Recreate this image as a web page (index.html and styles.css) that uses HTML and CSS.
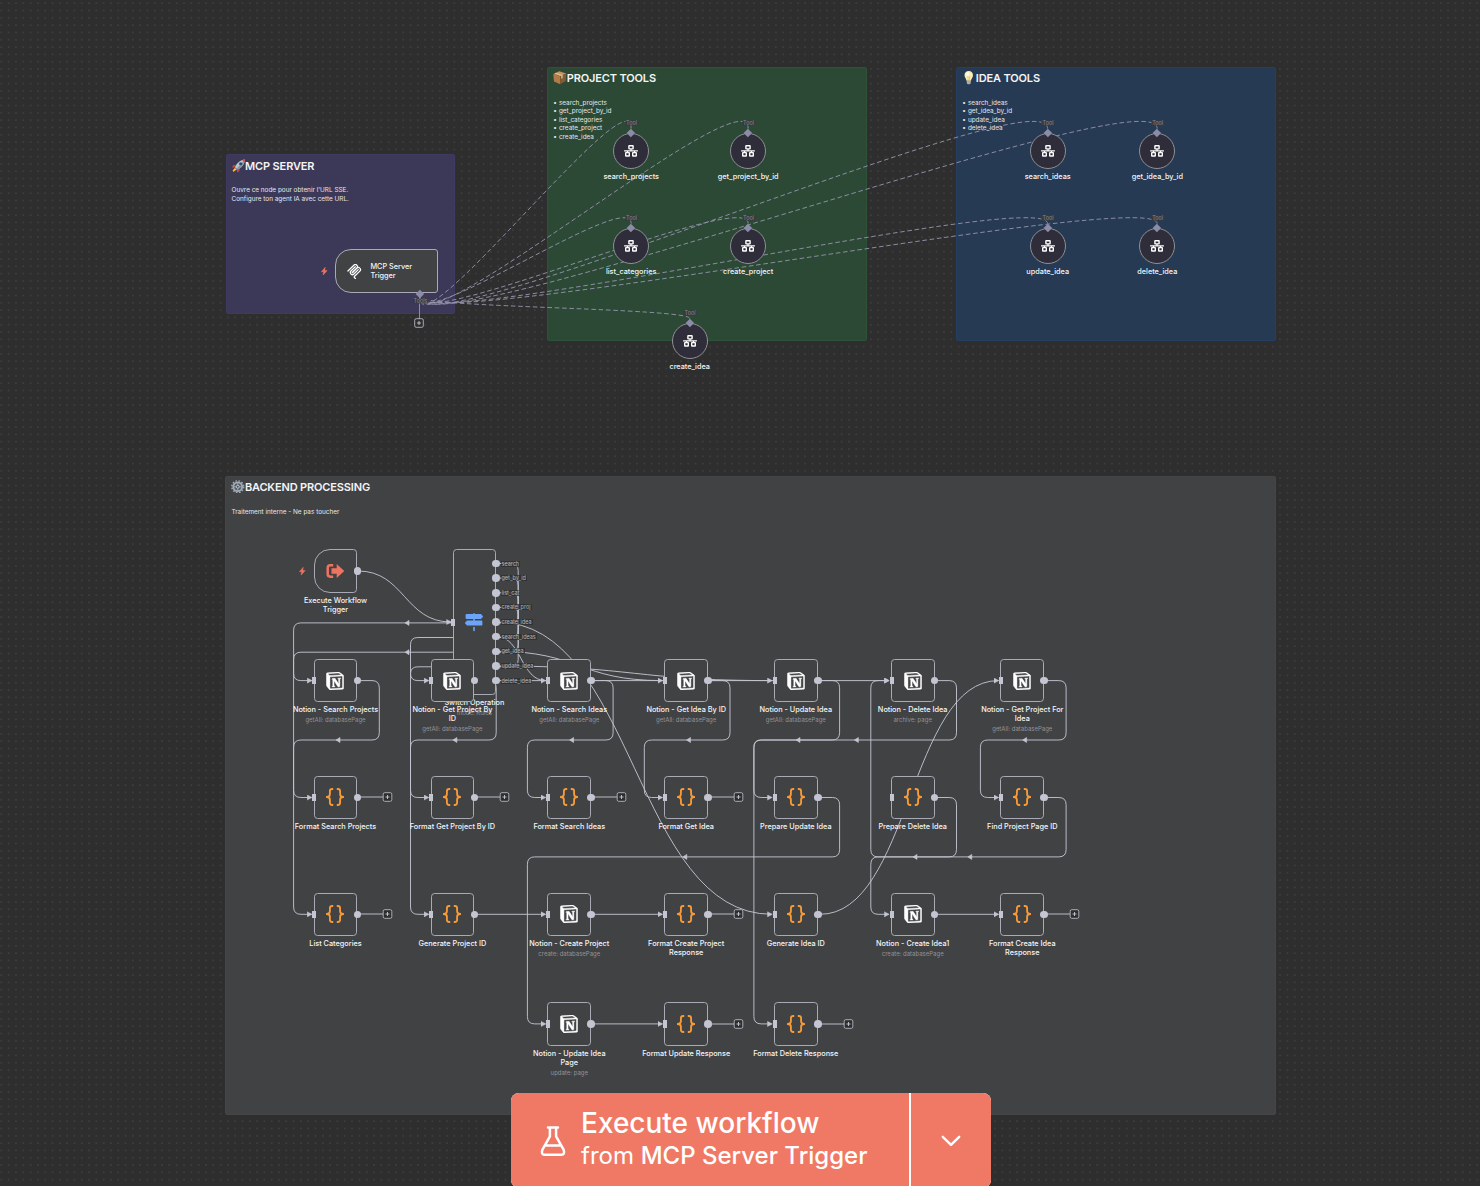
FILE: index.html
```html
<!DOCTYPE html>
<html lang="fr">
<head>
<meta charset="utf-8">
<title>Workflow</title>
<link rel="stylesheet" href="styles.css">
</head>
<body>
<svg class="defs" width="0" height="0">
  <defs>
    <symbol id="notion" viewBox="0 0 24 24"><path fill="#fff" stroke="#fff" stroke-width=".55" d="M4.459 4.208c.746.606 1.026.56 2.428.466l13.215-.793c.28 0 .047-.28-.046-.326L17.86 1.968c-.42-.326-.981-.7-2.055-.607L3.01 2.295c-.466.046-.56.28-.374.466zm.793 3.08v13.904c0 .747.373 1.027 1.214.98l14.523-.84c.841-.046.935-.56.935-1.167V6.354c0-.606-.233-.933-.748-.887l-15.177.887c-.56.047-.747.327-.747.933zm14.337.745c.093.42 0 .84-.42.888l-.7.14v10.264c-.608.327-1.168.514-1.635.514-.748 0-.935-.234-1.495-.933l-4.577-7.186v6.952L12.21 19s0 .84-1.168.84l-3.222.186c-.093-.186 0-.653.327-.746l.84-.233V9.854L7.822 9.76c-.094-.42.14-1.026.793-1.073l3.456-.233 4.764 7.279v-6.44l-1.215-.139c-.093-.514.28-.887.747-.933zM1.936 1.035l13.31-.98c1.634-.14 2.055-.047 3.082.7l4.249 2.986c.7.513.934.653.934 1.213v16.378c0 1.026-.373 1.634-1.68 1.726l-15.458.934c-.98.047-1.448-.093-1.962-.747l-3.129-4.06c-.56-.747-.793-1.306-.793-1.96V2.667c0-.839.374-1.54 1.447-1.632z"/></symbol>
    <symbol id="code" viewBox="0 0 18 18"><g fill="none" stroke="#f79b37" stroke-width="1.850" stroke-linejoin="round"><path d="M7.200 1H6.200C4.500 1 3.900 1.700 3.900 3.200V6.300C3.900 8 3 9 .7 9 3 9 3.900 10 3.900 11.700V14.800C3.900 16.300 4.500 17 6.200 17H7.200"/><path d="M10.800 1H11.800C13.500 1 14.100 1.700 14.100 3.200V6.300C14.100 8 15 9 17.300 9 15 9 14.100 10 14.100 11.700V14.800C14.100 16.300 13.500 17 11.800 17H10.800"/></g></symbol>
    <symbol id="net" viewBox="0 0 14 12"><g fill="none" stroke="#fff" stroke-width="1.400"><rect x="4.900" y=".8" width="4.200" height="3.100" rx=".3"/><rect x="1.700" y="7.600" width="3.600" height="3.400" rx=".3"/><rect x="8.700" y="7.600" width="3.600" height="3.400" rx=".3"/><path stroke-width="1.200" d="M7 4v1.900M3.500 7.600V5.900M10.500 7.600V5.900M.1 5.900h13.800"/></g></symbol>
    <symbol id="bolt" viewBox="0 0 6 8"><path fill="#ee7461" stroke="#ee7461" stroke-width=".4" d="M3.900.2.2 4.500h2.200L1.700 7.800 5.800 3.300H3.500z"/></symbol>
    <marker id="arrow" markerUnits="userSpaceOnUse" markerWidth="6" markerHeight="6" refX="4.600" refY="3" orient="auto"><path d="M.2.400 5 3 .2 5.600z" fill="#c3c6d2" stroke="#c3c6d2" stroke-width=".4" stroke-linejoin="round"/></marker>
    <path id="back" d="M2-2.500V2.500L-2 0z" fill="#c3c6d2" stroke="#c3c6d2" stroke-width=".6" stroke-linejoin="round"/>
  </defs>
</svg>

<main class="canvas">
  <svg class="layer" width="1480" height="1186">
    <pattern id="grid" x="-2.300" y="-.5" width="7.307" height="7.307" patternUnits="userSpaceOnUse"><circle cx="3.650" cy="3.650" r=".5" fill="#6c6c6c"/></pattern>
    <rect width="1480" height="1186" fill="url(#grid)"/>
  </svg>

  <section class="sticky sticky-purple">
    <h2><svg class="emoji" viewBox="0 0 14 14"><path d="M4 6 .9 6.600.2 9l3-.4zM8 10l-.6 3.100L5 13.800l.4-3z" fill="#c94434"/><path d="M3 8.500C5 4 8.500 1 13.500.5 13 5.500 10 9 5.500 11z" fill="#b9c6d0"/><path d="M4.500 10.300 12.500 1.500 13.500.5C13 5.500 10 9 5.500 11z" fill="#8494a3"/><path d="M13.500.5 10.500 1l2.500 2.500z" fill="#d84b3b"/><circle cx="9" cy="5" r="1.600" fill="#234b73"/><path d="m3 9 2 2-3.700 2.400L.6 12z" fill="#f5a623"/><path d="m3 10 1 1-2.500 1.500z" fill="#ffe36b"/></svg>MCP SERVER</h2>
    <p>Ouvre ce node pour obtenir l'URL SSE.<br>Configure ton agent IA avec cette URL.</p>
  </section>
  <section class="sticky sticky-green">
    <h2><svg class="emoji" viewBox="0 0 14 14"><path d="m.3 3 6.200-2.700 7.200 2.200-6.200 3z" fill="#c9935c"/><path d="m.3 3 7.200 2.500v8.300L1 10.900z" fill="#b07b48"/><path d="m7.500 5.500 6.200-3-.5 7.900-5.700 3.400z" fill="#875a33"/><path d="m3 1.900 7 2.200V7.400L8.600 8V4.900L1.600 2.500z" fill="#dfc195"/></svg>PROJECT TOOLS</h2>
    <ul><li>search_projects</li><li>get_project_by_id</li><li>list_categories</li><li>create_project</li><li>create_idea</li></ul>
  </section>
  <section class="sticky sticky-blue">
    <h2><svg class="emoji" viewBox="0 0 14 14"><path d="M7 .1C4.300.1 2.600 2 2.600 4.300c0 2.300 1.800 3.200 2.100 5.800h4.600c.3-2.600 2.100-3.500 2.100-5.800C11.400 2 9.700.1 7 .1z" fill="#fbedb4"/><path d="M6 5.200 6.500 10h1L8 5.200" fill="none" stroke="#e0b040" stroke-width=".6"/><ellipse cx="5.800" cy="3.200" rx="1.600" ry="1.900" fill="#fffdf2"/><path d="M4.900 10h4.200v2.600L8 13.700H6l-1.100-1.100z" fill="#a9adb0"/></svg>IDEA TOOLS</h2>
    <ul><li>search_ideas</li><li>get_idea_by_id</li><li>update_idea</li><li>delete_idea</li></ul>
  </section>
  <section class="sticky sticky-gray">
    <h2><svg class="emoji" viewBox="0 0 14 14"><circle cx="7" cy="7" r="6.200" fill="none" stroke="#a2adb8" stroke-width="1.400" stroke-dasharray="1.700 1.546"/><circle cx="7" cy="7" r="4.600" fill="#555c63" stroke="#a2adb8" stroke-width="1.900"/><path d="M7 3v3M7 8v3M3 7h3M8 7h3" stroke="#a2adb8" stroke-width=".9"/><circle cx="7" cy="7" r="1.500" fill="#4c5257" stroke="#c0c8cf" stroke-width="1"/></svg>BACKEND PROCESSING</h2>
    <p>Traitement interne - Ne pas toucher</p>
  </section>

  <svg class="layer" width="1480" height="1186">
    <g class="tool-edges">
      <path d="M631.200 128.600C631.200 73.600 419.500 352 419.500 297"/>
      <path d="M748.200 128.600C748.200 73.600 419.500 352 419.500 297"/>
      <path d="M1047.600 128.600C1047.600 73.600 419.500 352 419.500 297"/>
      <path d="M1157.200 128.600C1157.200 73.600 419.500 352 419.500 297"/>
      <path d="M631.200 223.600C631.200 187.100 419.500 333.500 419.500 297"/>
      <path d="M748.200 223.600C748.200 187.100 419.500 333.500 419.500 297"/>
      <path d="M1047.600 223.600C1047.600 187.100 419.500 333.500 419.500 297"/>
      <path d="M1157.200 223.600C1157.200 187.100 419.500 333.500 419.500 297"/>
      <path d="M689.700 318.500C689.700 308 419.500 307.500 419.500 297"/>
    </g>
    <path class="stem" d="M419.500 296V319"/>
    <g class="edges">
      <path d="M358 571C404.500 571 404.500 622 451 622"/>
      <!-- switch outputs -->
      <path d="M497 563.500H510.900Q518.200 563.500 518.200 570.800V615.600Q518.200 622.900 510.900 622.900H300.900Q293.600 622.900 293.600 630.200V673.300Q293.600 680.600 300.900 680.600H311.600"/>
      <path d="M497 578.100H510.900Q518.200 578.100 518.200 585.400V630.200Q518.200 637.500 510.900 637.500H417.800Q410.500 637.500 410.500 644.800V673.300Q410.500 680.600 417.800 680.600H428.500"/>
      <path d="M497 592.800H510.900Q518.200 592.800 518.200 600.100V644.900Q518.200 652.200 510.900 652.200H300.900Q293.600 652.200 293.600 659.500V907Q293.600 914.300 300.900 914.300H311.600"/>
      <path d="M497 607.400H510.900Q518.200 607.400 518.200 614.700V659.500Q518.200 666.800 510.900 666.800H417.800Q410.500 666.800 410.500 674.100V907Q410.500 914.300 417.800 914.300H428.500"/>
      <path d="M497 622C634.500 622 634.500 914.300 771.900 914.300"/>
      <path d="M497 636.700C521 636.700 521 680.600 545.400 680.600"/>
      <path d="M497 651.300C579.500 651.300 579.500 680.600 662.300 680.600"/>
      <path d="M497 666C634.500 666 634.500 680.600 771.900 680.600"/>
      <path d="M497 680.600H888.800"/>
      <!-- first row down to second row -->
      <path d="M358 680.600H372Q379.300 680.600 379.300 687.900V732.700Q379.300 740 372 740H300.900Q293.600 740 293.600 747.300V790.200Q293.600 797.500 300.900 797.500H311.600"/>
      <path d="M475 680.600H488.900Q496.200 680.600 496.200 687.900V732.700Q496.200 740 488.900 740H417.800Q410.500 740 410.500 747.300V790.200Q410.500 797.500 417.800 797.500H428.500"/>
      <path d="M592 680.600H605.800Q613.100 680.600 613.100 687.900V732.700Q613.100 740 605.800 740H534.700Q527.400 740 527.400 747.300V790.200Q527.400 797.500 534.700 797.500H545.400"/>
      <path d="M709 680.600H722.700Q730 680.600 730 687.900V732.700Q730 740 722.700 740H651.600Q644.300 740 644.300 747.300V790.200Q644.300 797.500 651.600 797.500H662.300"/>
      <path d="M818 680.600H832.300Q839.600 680.600 839.600 687.900V732.700Q839.600 740 832.300 740H761.200Q753.900 740 753.900 747.300V790.200Q753.900 797.500 761.200 797.500H771.900"/>
      <path d="M935 680.600H949.200Q956.500 680.600 956.500 687.900V732.700Q956.500 740 949.200 740H761.200Q753.900 740 753.900 747.300V1016.600Q753.900 1023.900 761.200 1023.900H771.900"/>
      <path d="M1044 680.600H1058.800Q1066.100 680.600 1066.100 687.900V732.700Q1066.100 740 1058.800 740H987.700Q980.400 740 980.400 747.300V790.200Q980.400 797.500 987.700 797.500H998.400"/>
      <!-- second row onwards -->
      <path d="M818 797.500H832.300Q839.600 797.500 839.600 804.800V849.600Q839.600 856.900 832.300 856.900H534.700Q527.400 856.900 527.400 864.200V1016.600Q527.400 1023.900 534.700 1023.900H545.400"/>
      <path d="M935 797.500H949.200Q956.500 797.500 956.500 804.800V849.600Q956.500 856.900 949.200 856.900H878.100Q870.800 856.900 870.800 849.600V687.900Q870.800 680.600 878.100 680.600H888.800"/>
      <path d="M1044 797.500H1058.800Q1066.100 797.500 1066.100 804.800V849.600Q1066.100 856.900 1058.800 856.900H878.100Q870.800 856.900 870.800 864.200V907Q870.800 914.300 878.100 914.300H888.800"/>
      <path d="M820 914.300C909.500 914.300 909.500 680.600 998.400 680.600"/>
      <path d="M474 914.300H545.400"/>
      <path d="M591 914.300H662.300"/>
      <path d="M935 914.300H998.400"/>
      <path d="M591 1023.900H662.300"/>
    </g>
    <use href="#back" x="407" y="622.900"/><use href="#back" x="407" y="652.200"/>
    <use href="#back" x="338" y="740"/><use href="#back" x="454.900" y="740"/><use href="#back" x="571.600" y="740"/><use href="#back" x="688.500" y="740"/><use href="#back" x="798" y="740"/><use href="#back" x="856.400" y="740"/><use href="#back" x="1024.600" y="740"/>
    <use href="#back" x="684.800" y="856.900"/><use href="#back" x="915" y="856.900"/><use href="#back" x="969.800" y="856.900"/>
  </svg>

  <!-- MCP trigger -->
  <svg class="bolt" viewBox="0 0 6 8" style="--x:324.500px;--y:271px"><use href="#bolt"/></svg>
  <div class="mcp-node">
    <svg viewBox="0 0 24 24"><g fill="none" stroke="#fff" stroke-width="2" stroke-linecap="round"><path d="M1.500 11.300 11 1.900a3.300 3.300 0 0 1 4.700 4.700L8.500 13.800"/><path d="m8.600 13.700 7.100-7.100a3.300 3.300 0 0 1 4.800 4.800l-8.700 8.600a1.100 1.100 0 0 0 0 1.600l1.800 1.800"/><path d="M13.300 4.300 6.300 11.300A3.300 3.300 0 0 0 11 16l7-7"/></g></svg>
    <span>MCP Server<br>Trigger</span>
  </div>
  <i class="diamond" style="--x:419.500px;--y:293.500px"></i>
  <span class="port-label tag" style="--x:420.500px;--y:301px">Tools</span>
  <svg class="plus-box" style="--x:419.300px;--y:323.300px" viewBox="0 0 10 10"><rect x=".7" y=".7" width="8.600" height="8.600" rx="1.500"/><path d="M5 3v4M3 5h4"/></svg>

  <!-- tools -->
  <div class="tool" style="--x:631.200px;--y:150.700px"><svg><use href="#net"/></svg><i class="diamond"></i><span class="port-label tag">Tool</span><b>search_projects</b></div>
  <div class="tool" style="--x:748.200px;--y:150.700px"><svg><use href="#net"/></svg><i class="diamond"></i><span class="port-label tag">Tool</span><b>get_project_by_id</b></div>
  <div class="tool" style="--x:631.200px;--y:245.700px"><svg><use href="#net"/></svg><i class="diamond"></i><span class="port-label tag">Tool</span><b>list_categories</b></div>
  <div class="tool" style="--x:748.200px;--y:245.700px"><svg><use href="#net"/></svg><i class="diamond"></i><span class="port-label tag">Tool</span><b>create_project</b></div>
  <div class="tool" style="--x:689.700px;--y:340.700px"><svg><use href="#net"/></svg><i class="diamond"></i><span class="port-label tag">Tool</span><b>create_idea</b></div>
  <div class="tool" style="--x:1047.700px;--y:150.700px"><svg><use href="#net"/></svg><i class="diamond"></i><span class="port-label tag">Tool</span><b>search_ideas</b></div>
  <div class="tool" style="--x:1157.300px;--y:150.700px"><svg><use href="#net"/></svg><i class="diamond"></i><span class="port-label tag">Tool</span><b>get_idea_by_id</b></div>
  <div class="tool" style="--x:1047.700px;--y:245.700px"><svg><use href="#net"/></svg><i class="diamond"></i><span class="port-label tag">Tool</span><b>update_idea</b></div>
  <div class="tool" style="--x:1157.300px;--y:245.700px"><svg><use href="#net"/></svg><i class="diamond"></i><span class="port-label tag">Tool</span><b>delete_idea</b></div>

  <!-- workflow trigger -->
  <svg class="bolt" viewBox="0 0 6 8" style="--x:302.700px;--y:570.800px"><use href="#bolt"/></svg>
  <div class="node trigger" style="--x:335.500px;--y:570.900px"><svg class="icon" viewBox="0 0 18 18"><path d="M7.200 3.300H4.300Q1.700 3.300 1.700 5.900v6.200q0 2.600 2.600 2.600h2.900" fill="none" stroke="#ee7461" stroke-width="2.500"/><path d="M5.500 6.300h5.200V2L18.300 9l-7.600 7v-4.300H5.500z" fill="#ee7461"/></svg><p class="label">Execute Workflow<br>Trigger</p></div>

  <!-- switch -->
  <div class="node switch" style="--x:474.300px;--y:622px"><svg class="icon" viewBox="0 0 18 18"><path fill="#6ba4f8" d="M8.200.2h1.600v.9H16l2.200 2.400L16 5.900H1.500a.9.900 0 0 1-.9-.9V2a.9.900 0 0 1 .9-.9h6.700zM8.200 5.800h1.600v2.100H8.200zM2 7.600h14.500a.9.900 0 0 1 .9.900v3a.9.900 0 0 1-.9.900H2L-.2 10zM8.200 13.900h1.600v3.600a.8.800 0 0 1-1.600 0z"/></svg><p class="label">Switch Operation<small>mode: Rules</small></p>
    <ol><li><span class="port-label">search</span></li><li><span class="port-label">get_by_id</span></li><li><span class="port-label">list_cat</span></li><li><span class="port-label">create_proj</span></li><li><span class="port-label">create_idea</span></li><li><span class="port-label">search_ideas</span></li><li><span class="port-label">get_idea</span></li><li><span class="port-label">update_idea</span></li><li><span class="port-label">delete_idea</span></li></ol>
  </div>

  <!-- row 1 -->
  <div class="node" style="--x:335.500px;--y:680.600px"><svg class="icon"><use href="#notion"/></svg><p class="label">Notion - Search Projects<small>getAll: databasePage</small></p></div>
  <div class="node" style="--x:452.400px;--y:680.600px"><svg class="icon"><use href="#notion"/></svg><p class="label">Notion - Get Project By<br>ID<small>getAll: databasePage</small></p></div>
  <div class="node" style="--x:569.300px;--y:680.600px"><svg class="icon"><use href="#notion"/></svg><p class="label">Notion - Search Ideas<small>getAll: databasePage</small></p></div>
  <div class="node" style="--x:686.200px;--y:680.600px"><svg class="icon"><use href="#notion"/></svg><p class="label">Notion - Get Idea By ID<small>getAll: databasePage</small></p></div>
  <div class="node" style="--x:795.800px;--y:680.600px"><svg class="icon"><use href="#notion"/></svg><p class="label">Notion - Update Idea<small>getAll: databasePage</small></p></div>
  <div class="node" style="--x:912.700px;--y:680.600px"><svg class="icon"><use href="#notion"/></svg><p class="label">Notion - Delete Idea<small>archive: page</small></p></div>
  <div class="node" style="--x:1022.300px;--y:680.600px"><svg class="icon"><use href="#notion"/></svg><p class="label">Notion - Get Project For<br>Idea<small>getAll: databasePage</small></p></div>

  <!-- row 2 -->
  <div class="node" style="--x:335.500px;--y:797.500px"><svg class="icon"><use href="#code"/></svg><p class="label">Format Search Projects</p><svg class="plus" viewBox="0 0 36 10"><path d="M0 5h26"/><rect x="26.200" y=".7" width="8.600" height="8.600" rx="1.500"/><path d="M30.500 3v4M28.500 5h4"/></svg></div>
  <div class="node" style="--x:452.400px;--y:797.500px"><svg class="icon"><use href="#code"/></svg><p class="label">Format Get Project By ID</p><svg class="plus" viewBox="0 0 36 10"><path d="M0 5h26"/><rect x="26.200" y=".7" width="8.600" height="8.600" rx="1.500"/><path d="M30.500 3v4M28.500 5h4"/></svg></div>
  <div class="node" style="--x:569.300px;--y:797.500px"><svg class="icon"><use href="#code"/></svg><p class="label">Format Search Ideas</p><svg class="plus" viewBox="0 0 36 10"><path d="M0 5h26"/><rect x="26.200" y=".7" width="8.600" height="8.600" rx="1.500"/><path d="M30.500 3v4M28.500 5h4"/></svg></div>
  <div class="node" style="--x:686.200px;--y:797.500px"><svg class="icon"><use href="#code"/></svg><p class="label">Format Get Idea</p><svg class="plus" viewBox="0 0 36 10"><path d="M0 5h26"/><rect x="26.200" y=".7" width="8.600" height="8.600" rx="1.500"/><path d="M30.500 3v4M28.500 5h4"/></svg></div>
  <div class="node" style="--x:795.800px;--y:797.500px"><svg class="icon"><use href="#code"/></svg><p class="label">Prepare Update Idea</p></div>
  <div class="node" style="--x:912.700px;--y:797.500px"><svg class="icon"><use href="#code"/></svg><p class="label">Prepare Delete Idea</p></div>
  <div class="node" style="--x:1022.300px;--y:797.500px"><svg class="icon"><use href="#code"/></svg><p class="label">Find Project Page ID</p></div>

  <!-- row 3 -->
  <div class="node" style="--x:335.500px;--y:914.500px"><svg class="icon"><use href="#code"/></svg><p class="label">List Categories</p><svg class="plus" viewBox="0 0 36 10"><path d="M0 5h26"/><rect x="26.200" y=".7" width="8.600" height="8.600" rx="1.500"/><path d="M30.500 3v4M28.500 5h4"/></svg></div>
  <div class="node" style="--x:452.400px;--y:914.500px"><svg class="icon"><use href="#code"/></svg><p class="label">Generate Project ID</p></div>
  <div class="node" style="--x:569.300px;--y:914.500px"><svg class="icon"><use href="#notion"/></svg><p class="label">Notion - Create Project<small>create: databasePage</small></p></div>
  <div class="node" style="--x:686.200px;--y:914.500px"><svg class="icon"><use href="#code"/></svg><p class="label">Format Create Project<br>Response</p><svg class="plus" viewBox="0 0 36 10"><path d="M0 5h26"/><rect x="26.200" y=".7" width="8.600" height="8.600" rx="1.500"/><path d="M30.500 3v4M28.500 5h4"/></svg></div>
  <div class="node" style="--x:795.800px;--y:914.500px"><svg class="icon"><use href="#code"/></svg><p class="label">Generate Idea ID</p></div>
  <div class="node" style="--x:912.700px;--y:914.500px"><svg class="icon"><use href="#notion"/></svg><p class="label">Notion - Create Idea1<small>create: databasePage</small></p></div>
  <div class="node" style="--x:1022.300px;--y:914.500px"><svg class="icon"><use href="#code"/></svg><p class="label">Format Create Idea<br>Response</p><svg class="plus" viewBox="0 0 36 10"><path d="M0 5h26"/><rect x="26.200" y=".7" width="8.600" height="8.600" rx="1.500"/><path d="M30.500 3v4M28.500 5h4"/></svg></div>

  <!-- row 4 -->
  <div class="node" style="--x:569.300px;--y:1023.900px"><svg class="icon"><use href="#notion"/></svg><p class="label">Notion - Update Idea<br>Page<small>update: page</small></p></div>
  <div class="node" style="--x:686.200px;--y:1023.900px"><svg class="icon"><use href="#code"/></svg><p class="label">Format Update Response</p><svg class="plus" viewBox="0 0 36 10"><path d="M0 5h26"/><rect x="26.200" y=".7" width="8.600" height="8.600" rx="1.500"/><path d="M30.500 3v4M28.500 5h4"/></svg></div>
  <div class="node" style="--x:795.800px;--y:1023.900px"><svg class="icon"><use href="#code"/></svg><p class="label">Format Delete Response</p><svg class="plus" viewBox="0 0 36 10"><path d="M0 5h26"/><rect x="26.200" y=".7" width="8.600" height="8.600" rx="1.500"/><path d="M30.500 3v4M28.500 5h4"/></svg></div>

  <div class="run">
    <button class="run-main">
      <svg class="flask" viewBox="0 0 26 32"><g fill="none" stroke="#fff" stroke-width="2.500" stroke-linecap="round" stroke-linejoin="round"><path d="M8 2.400h10M9.900 2.400v9L2.300 24.800Q.9 29.700 4.600 29.700h16.800q3.700 0 2.300-4.900L16.100 11.400v-9M6 20.400h14"/></g></svg>
      <span><strong>Execute workflow</strong><em>from <b>MCP Server Trigger</b></em></span>
    </button>
    <button class="run-more" aria-label="Triggers"><svg viewBox="0 0 20 12"><path d="m1.800 1.800 8.200 8 8.200-8" fill="none" stroke="#fff" stroke-width="2.400" stroke-linecap="round" stroke-linejoin="round"/></svg></button>
  </div>
</main>
</body>
</html>
```
FILE: styles.css
```css
* { box-sizing: border-box; }
body { margin: 0; background: #2e2e2e; font-family: Inter, "Liberation Sans", sans-serif; color: #f4f4f6; }
.defs { position: absolute; }
.canvas { position: relative; width: 1480px; height: 1186px; overflow: hidden; }
.layer { position: absolute; left: 0; top: 0; }

.sticky { position: absolute; border: 1px solid; border-radius: 2px; padding: 3px 5px; }
.sticky h2 { display: flex; align-items: center; margin: 0; height: 14px; font-size: 11px; font-weight: 600; line-height: 14px; letter-spacing: -.15px; white-space: nowrap; }
.sticky .emoji { width: 13.500px; height: 13.500px; flex: none; }
.sticky p, .sticky ul { margin: 13.500px 0 0; padding: 0; list-style: none; font-size: 6.400px; line-height: 8.600px; color: #e6e6ea; }
.sticky li::before { content: "•"; margin-right: 2px; }
.sticky-purple { left: 225.600px; top: 153.800px; width: 229px; height: 160.500px; padding-top: 4px; background: #3c3857; border-color: #403a62; }
.sticky-green { left: 547.300px; top: 67px; width: 320px; height: 273.800px; background: #2b4935; border-color: #2d5239; }
.sticky-blue { left: 956.300px; top: 67px; width: 320px; height: 273.800px; background: #263a53; border-color: #263e60; }
.sticky-gray { left: 225.400px; top: 475.600px; width: 1050.800px; height: 639.800px; background: #414244; border-color: #444547; }
.sticky-gray p { margin-top: 14px; }

.edges path { fill: none; stroke: #c3c6d2; stroke-width: .92; marker-end: url(#arrow); }
.tool-edges path { fill: none; stroke: #9493ab; stroke-width: .92; stroke-dasharray: 4.600 2.700; }
.stem { stroke: #9493ab; stroke-width: .92; }

.bolt { position: absolute; left: calc(var(--x) - 3.300px); top: calc(var(--y) - 4.300px); width: 6.600px; height: 8.600px; }
.diamond { position: absolute; left: calc(var(--x) - 2.900px); top: calc(var(--y) - 2.900px); width: 5.800px; height: 5.800px; background: #8d8ca8; transform: rotate(45deg); }
.port-label { display: block; padding: 0 1px; font-size: 5.500px; line-height: 6px; white-space: nowrap; color: #b3b4ba; background: rgba(46, 46, 46, .75); }
.tag { position: absolute; left: var(--x); top: var(--y); transform: translate(-50%, -50%); line-height: 5px; color: #85848f; background: #393a3d; }

.mcp-node { position: absolute; left: 335.400px; top: 249.400px; width: 102.400px; height: 43.800px; display: flex; align-items: center; gap: 8.500px; padding-left: 10.500px; font-size: 7.300px; font-weight: 500; line-height: 9.200px; background: #414244; border: 1px solid #a9a9b8; border-radius: 16px 3px 3px 16px; }
.mcp-node svg { width: 15px; height: 15px; }
.plus-box { position: absolute; left: calc(var(--x) - 5px); top: calc(var(--y) - 5px); width: 10px; height: 10px; }

.tool { position: absolute; left: calc(var(--x) - 18.200px); top: calc(var(--y) - 18.200px); width: 36.400px; height: 36.400px; display: flex; align-items: center; justify-content: center; background: #2e2d39; border: 1px solid #8f8f95; border-radius: 50%; }
.tool svg { width: 14px; height: 12px; }
.tool .diamond { left: 14.400px; top: -4px; }
.tool .tag { left: 17.600px; top: -10.900px; }
.tool b { position: absolute; left: 50%; top: 38.500px; transform: translateX(-50%); font-size: 7.300px; line-height: 9.200px; font-weight: 500; }

.node { position: absolute; left: calc(var(--x) - 21.900px); top: calc(var(--y) - 21.900px); width: 43.800px; height: 43.800px; display: flex; align-items: center; justify-content: center; background: #414244; border: 1px solid #a9aab6; border-radius: 3.600px; }
.node::before { content: ""; position: absolute; left: -2.300px; top: 17.400px; width: 4px; height: 7.300px; background: #c3c6d2; }
.node::after { content: ""; position: absolute; right: -4.900px; top: 17px; width: 7.600px; height: 7.600px; border-radius: 50%; background: #c3c6d2; }
.icon { width: 18px; height: 18px; overflow: visible; }
.label { position: absolute; left: 50%; top: 45.600px; transform: translateX(-50%); margin: 0; font-size: 7.300px; font-weight: 500; line-height: 9.200px; text-align: center; white-space: nowrap; }
.label small { display: block; margin-top: 1.500px; font-size: 6px; line-height: 8px; font-weight: 400; color: #929399; }
.plus { position: absolute; left: 42.800px; top: 15.700px; width: 36px; height: 10px; }
.plus path, .plus-box path { fill: none; stroke: #c3c6d2; stroke-width: .92; }
.plus rect, .plus-box rect { fill: #2e2e2e; stroke: #b4b6c0; stroke-width: .92; }

.trigger { border-radius: 16px 3.600px 3.600px 16px; }
.trigger::before { display: none; }
.switch { left: 452.500px; top: 549.300px; height: 145.400px; }
.switch::before { top: 68.400px; }
.switch::after { display: none; }
.switch .label { top: 147.500px; }
.switch ol { position: absolute; left: 38.500px; top: 5.900px; margin: 0; padding: 0; list-style: none; }
.switch li { display: flex; align-items: center; gap: 1px; height: 14.630px; }
.switch li::before { content: ""; width: 7.500px; height: 7.500px; border-radius: 50%; background: #c3c6d2; }

.run { position: absolute; left: 511px; top: 1093px; width: 480px; height: 95px; display: flex; gap: 2px; background: #fff; border-radius: 8px; overflow: hidden; }
.run button { margin: 0; border: 0; background: #f07965; color: #fff; font-family: inherit; text-align: left; }
.run-main { width: 398px; padding: 0 0 0 29px; display: flex; align-items: center; gap: 15px; }
.run-main span { margin-top: -3px; }
.flask { width: 26px; height: 32px; }
.run strong { display: block; font-size: 28px; line-height: 34px; font-weight: 500; }
.run em { display: block; font-size: 24px; line-height: 32px; font-style: normal; font-weight: 400; }
.run em b { font-weight: 500; }
.run-more { flex: 1; display: flex; align-items: center; justify-content: center; padding: 0; }
.run-more svg { width: 20px; height: 12px; }
```
